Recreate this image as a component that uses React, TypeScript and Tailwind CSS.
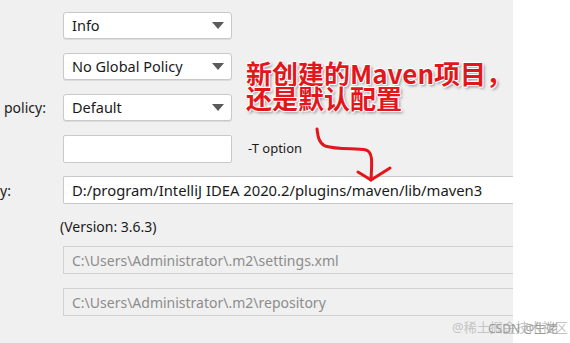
import { ReactNode } from 'react';

const ui = { fontFamily: '"Noto Sans", "Noto Sans CJK SC", sans-serif' };

function Select({ value }: { value: string }) {
  return (
    <div className="flex items-center justify-between w-[169px] h-[27px] bg-white border border-[#c9c9c9] rounded-[3px] shadow-[0_1px_0_#dcdcdc] pl-2 pr-[7px]">
      <span className="text-[14.5px] text-[#1a1a1a]">{value}</span>
      <svg width="12" height="7" viewBox="0 0 12 7">
        <path d="M0 0h12L6 7z" fill="#5a5a5a" />
      </svg>
    </div>
  );
}

function Row({ label, children }: { label?: string; children: ReactNode }) {
  return (
    <div className="flex items-center h-[27px]">
      <div className="w-[63px] shrink-0 text-[14px] text-[#1a1a1a] pl-1">{label}</div>
      {children}
    </div>
  );
}

export default function App() {
  return (
    <div className="relative w-[570px] h-[343px] bg-white overflow-hidden" style={ui}>
      <div className="w-[513px] h-full bg-[#f0f0f0] overflow-hidden pt-3">
        <div className="flex flex-col gap-[14px]">
          <Row>
            <Select value="Info" />
          </Row>
          <Row>
            <Select value="No Global Policy" />
          </Row>
          <Row label="policy:">
            <Select value="Default" />
          </Row>
          <Row>
            <div className="w-[169px] h-[28px] bg-white border border-[#c9c9c9] rounded-[2px] shrink-0" />
            <span className="ml-4 text-[13px] text-[#1a1a1a]">-T option</span>
          </Row>
        </div>
        <div className="flex items-center h-[28px] mt-[14px]">
          <div className="w-[63px] shrink-0 text-[14px] text-[#1a1a1a]">y:</div>
          <div className="w-[480px] shrink-0 h-[28px] bg-white border-y border-l border-[#c9c9c9] rounded-l-[2px] flex items-center pl-2 text-[14.8px] text-[#1a1a1a]">
            D:/program/IntelliJ IDEA 2020.2/plugins/maven/lib/maven3
          </div>
        </div>
        <div className="ml-[60px] mt-[14px] text-[14px] text-[#1a1a1a] leading-[18px]">(Version: 3.6.3)</div>
        <div className="ml-[63px] mt-[10px] flex flex-col gap-[14px]">
          <div className="w-[480px] h-[28px] border-y border-l border-[#d2d2d2] flex items-center pl-2 text-[14px] text-[#8c8c8c]">
            C:\Users\Administrator\.m2\settings.xml
          </div>
          <div className="w-[480px] h-[28px] border-y border-l border-[#d2d2d2] flex items-center pl-2 text-[14px] text-[#8c8c8c]">
            C:\Users\Administrator\.m2\repository
          </div>
        </div>
      </div>

      <div
        className="absolute left-[246px] top-[60px] text-[26px] font-bold leading-[25px] text-[#e3161c] whitespace-nowrap [text-shadow:1px_0_0_#fff,-1px_0_0_#fff,0_1px_0_#fff,0_-1px_0_#fff,1px_1px_1px_#fff,-1px_-1px_1px_#fff,2px_2px_3px_#8a8a8a]"
        style={{ fontFamily: '"Noto Sans CJK SC", "Noto Sans", sans-serif' }}
      >
        <div>新创建的Maven项目，</div>
        <div>还是默认配置</div>
      </div>

      <svg className="absolute left-0 top-0" width="570" height="343" viewBox="0 0 570 343">
        <path
          d="M317 129 C318 137 319 143 325 146 C338 150 356 148 366 150 C373 152 372 162 371 180"
          fill="none"
          stroke="#e3161c"
          strokeWidth="3"
          strokeLinecap="round"
        />
        <path d="M358 172 L371 180 L390 168" fill="none" stroke="#e3161c" strokeWidth="3" strokeLinecap="round" strokeLinejoin="round" />
      </svg>

      <div className="absolute left-[452px] top-[318px] text-[13px] text-[#c4c4c4] whitespace-nowrap">@稀土掘金技术社区</div>
      <div className="absolute left-[488px] top-[320px] text-[12px] text-[#9a9a9a] whitespace-nowrap">CSDN @生姥</div>
    </div>
  );
}
